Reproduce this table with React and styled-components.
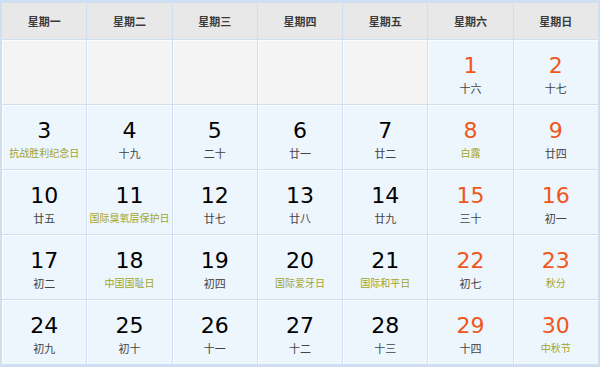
import React from 'react';
import styled, { createGlobalStyle } from 'styled-components';

const GlobalStyle = createGlobalStyle`
  html, body {
    margin: 0;
    padding: 0;
    background: #ffffff;
  }
`;

const StyledCalendar = styled.div`
  display: grid;
  grid-template-columns: repeat(7, 1fr);
  grid-template-rows: 36px repeat(5, 64px);
  gap: 1px;
  width: 600px;
  height: 367px;
  box-sizing: border-box;
  padding: 3px 2px 3px 2px;
  background-color: #cfdef0;
  font-family: "DejaVu Sans", Verdana, "Noto Sans CJK SC", sans-serif;
`;

const StyledHeadCell = styled.div`
  display: flex;
  align-items: center;
  justify-content: center;
  background-color: #e8e8e8;
  color: #3a3a3a;
  font-size: 11px;
  font-weight: bold;
  font-family: "Noto Sans CJK SC", sans-serif;
`;

const StyledDayCell = styled.div`
  display: flex;
  flex-direction: column;
  align-items: center;
  justify-content: center;
  padding-top: 4px;
  background-color: ${(p) => (p.$empty && !p.$weekend ? '#f4f4f4' : '#edf5fd')};
  box-shadow: inset 1px 1px 0 #fbfdff;
`;

const StyledNumber = styled.div`
  font-size: 22px;
  line-height: 26px;
  color: ${(p) => (p.$weekend ? '#f0561b' : '#000')};
`;

const StyledNote = styled.div`
  margin-top: 2px;
  white-space: nowrap;
  font-family: "Noto Sans CJK SC", sans-serif;
  font-size: ${(p) => (p.$festival ? '10px' : '11px')};
  line-height: 14px;
  color: ${(p) => (p.$festival ? '#a3a424' : '#444')};
`;

const weekNames = ['星期一', '星期二', '星期三', '星期四', '星期五', '星期六', '星期日'];

const days = [
  [1, '十六'], [2, '十七'], [3, '抗战胜利纪念日', true], [4, '十九'], [5, '二十'],
  [6, '廿一'], [7, '廿二'], [8, '白露', true], [9, '廿四'], [10, '廿五'],
  [11, '国际臭氧层保护日', true], [12, '廿七'], [13, '廿八'], [14, '廿九'], [15, '三十'],
  [16, '初一'], [17, '初二'], [18, '中国国耻日', true], [19, '初四'], [20, '国际爱牙日', true],
  [21, '国际和平日', true], [22, '初七'], [23, '秋分', true], [24, '初九'], [25, '初十'],
  [26, '十一'], [27, '十二'], [28, '十三'], [29, '十四'], [30, '中秋节', true],
];

const App = () => {
  const cells = [];
  for (let i = 0; i < 5; i++) cells.push(null);
  days.forEach((d) => cells.push(d));

  return (
    <>
      <GlobalStyle />
      <StyledCalendar>
        {weekNames.map((name) => (
          <StyledHeadCell key={name}>{name}</StyledHeadCell>
        ))}
        {cells.map((cell, index) => {
          const weekend = index % 7 >= 5;
          if (!cell) return <StyledDayCell key={index} $empty $weekend={weekend} />;
          const [num, note, festival] = cell;
          return (
            <StyledDayCell key={index} $weekend={weekend}>
              <StyledNumber $weekend={weekend}>{num}</StyledNumber>
              <StyledNote $festival={festival}>{note}</StyledNote>
            </StyledDayCell>
          );
        })}
      </StyledCalendar>
    </>
  );
};

export default App;
